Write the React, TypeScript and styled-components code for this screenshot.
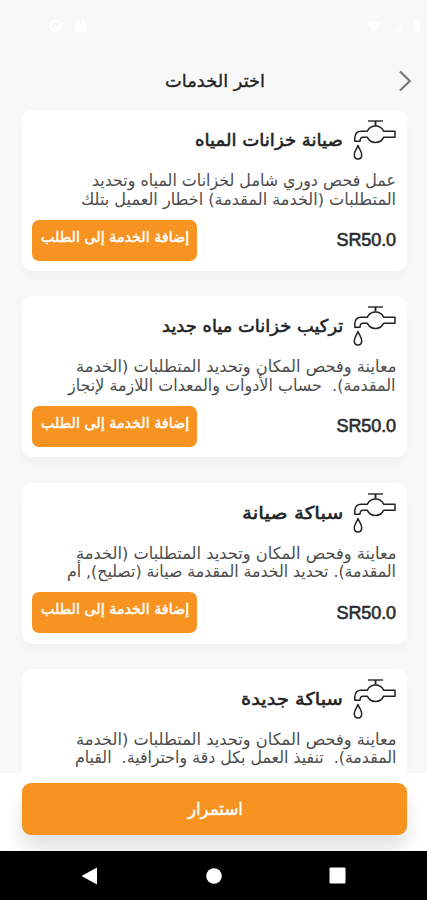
import React, { useLayoutEffect, useRef, useState } from "react";
import styled, { createGlobalStyle } from "styled-components";

const GlobalStyle = createGlobalStyle`
  * { box-sizing: border-box; }
  body { margin: 0; background: #f8f8f8; font-family: "DejaVu Sans", "Liberation Sans", sans-serif; }
`;

const Screen = styled.div`
  width: 427px;
  height: 900px;
  display: flex;
  flex-direction: column;
  overflow: hidden;
  background: #f8f8f8;
`;

const StatusBar = styled.div`
  height: 52px;
  flex: none;
  padding: 18px 6px 0 49px;
  display: flex;
  justify-content: space-between;
`;

const StatusGroup = styled.div`
  display: flex;
  gap: 11px;
  height: 16px;
  align-items: center;
`;

const Header = styled.header`
  height: 58px;
  flex: none;
  display: grid;
  grid-template-columns: 34px 1fr 34px;
  align-items: center;
  justify-items: center;
  padding: 0 4px 1px 7px;
  color: #242424;
`;

const Back = styled.button`
  grid-column: 3;
  border: 0;
  padding: 0;
  background: none;
  display: flex;
`;

const HeaderTitle = styled.h1`
  grid-column: 2;
  margin: 0;
  font-size: 17.5px;
  line-height: 22px;
  font-weight: 400;
  -webkit-text-stroke: 0.35px #242424;
`;

const List = styled.main`
  flex: none;
  height: 663px;
  overflow: hidden;
  padding: 0 20px 0 22px;
  display: flex;
  flex-direction: column;
  gap: 25.3px;
`;

const Card = styled.article`
  flex: none;
  height: 161px;
  padding: 8px 11px 10px 10px;
  border-radius: 10px;
  background: #fff;
  box-shadow: 0 7px 7px rgba(0, 0, 0, 0.025);
`;

const CardHead = styled.div`
  direction: rtl;
  display: flex;
  align-items: flex-start;
  gap: 10px;
  height: 54px;
  color: #222;
`;

const CardTitle = styled.h2`
  margin: 10px 0 0;
  font-size: 17.5px;
  line-height: 24px;
  font-weight: 400;
  -webkit-text-stroke: 0.55px #222;
`;

const Description = styled.div`
  direction: rtl;
  height: 47px;
  font-size: 16.5px;
  line-height: 18.6px;
  color: #4c4c4c;
`;

const CardFoot = styled.div`
  display: flex;
  justify-content: space-between;
`;

const AddButton = styled.button`
  width: 165px;
  height: 41px;
  margin-top: 0.5px;
  border: 0;
  border-radius: 7px;
  padding: 0 0 7px 2px;
  display: flex;
  align-items: center;
  justify-content: center;
  background: #f79321;
  color: #fff;
  font: 400 14.5px "DejaVu Sans", sans-serif;
  -webkit-text-stroke: 0.45px #fff;
`;

const Price = styled.div`
  padding-top: 10px;
  font: 400 18px/22px "Liberation Sans", sans-serif;
  letter-spacing: -0.1px;
  color: #2c2c2c;
  -webkit-text-stroke: 0.6px #2c2c2c;
`;

const Footer = styled.footer`
  flex: none;
  height: 78px;
  padding: 10px 20px 0 22px;
  background: #fff;
  overflow: hidden;
`;

const Continue = styled.button`
  width: 100%;
  height: 52px;
  border: 0;
  border-radius: 9px;
  padding: 0 0 0 1px;
  display: flex;
  align-items: center;
  justify-content: center;
  background: #f79321;
  box-shadow: 0 14px 18px rgba(0, 0, 0, 0.11);
  color: #fff;
  font: 400 17.5px "DejaVu Sans", sans-serif;
  -webkit-text-stroke: 0.5px #fff;
`;

const NavBar = styled.nav`
  flex: none;
  height: 49px;
  padding: 0 81px;
  background: #000;
  display: flex;
  align-items: center;
  justify-content: space-between;
`;

const FitBox = styled.span<{ $width: number }>`
  display: block;
  width: ${(p) => p.$width}px;
  direction: rtl;
  white-space: pre;
`;

const FitInner = styled.span`
  display: inline-block;
  transform-origin: right center;
`;

/* Condenses or widens one line of text so that it fills the given width. */
function FitLine({ width, children }: { width: number; children: string }) {
  const ref = useRef<HTMLSpanElement>(null);
  const [scale, setScale] = useState(1);
  useLayoutEffect(() => {
    if (ref.current) setScale(width / ref.current.offsetWidth);
  }, [width, children]);
  return (
    <FitBox $width={width}>
      <FitInner ref={ref} style={{ transform: `scaleX(${scale})` }}>{children}</FitInner>
    </FitBox>
  );
}

function Faucet() {
  return (
    <svg width="43" height="43" viewBox="0 0 43 43" fill="none" stroke="#222" strokeWidth="1.5" strokeLinejoin="round">
      <path d="M15 3H30" stroke="#555" strokeWidth="1.8" />
      <path d="M22.500 3v4.500" strokeWidth="1.9" />
      <path d="M14.400 13.200A9 9 0 0 1 30.600 13.200H42V19.300H30.600A9 9 0 0 1 14.400 19.300H10Q7 19.300 7 23.300H1.800V19.500Q2.300 13.200 8 13.200Z" />
      <path d="M5 27.500C3.800 31 1.300 33.500 1.300 36.800Q1.300 41 5 41T8.700 36.800C8.700 33.500 6.200 31 5 27.500Z" />
    </svg>
  );
}

type Line = [text: string, width: number];
interface Service { title: Line; lines: Line[]; price?: string; }

const services: Service[] = [
  { title: ["صيانة خزانات المياه", 148], price: "SR50.0", lines: [["عمل فحص دوري شامل لخزانات المياه وتحديد", 304], ["المتطلبات (الخدمة المقدمة) اخطار العميل بتلك", 315]] },
  { title: ["تركيب خزانات مياه جديد", 181], price: "SR50.0", lines: [["معاينة وفحص المكان وتحديد المتطلبات (الخدمة", 320], ["المقدمة).  حساب الأدوات والمعدات اللازمة لإنجاز", 328]] },
  { title: ["سباكة صيانة", 101], price: "SR50.0", lines: [["معاينة وفحص المكان وتحديد المتطلبات (الخدمة", 320], ["المقدمة). تحديد الخدمة المقدمة صيانة (تصليح), أم", 329]] },
  { title: ["سباكة جديدة", 102], lines: [["معاينة وفحص المكان وتحديد المتطلبات (الخدمة", 320], ["المقدمة).  تنفيذ العمل بكل دقة واحترافية.  القيام", 322]] },
];

export default function App() {
  return (
    <>
      <GlobalStyle />
      <Screen>
        <StatusBar>
          <StatusGroup>
            <svg width="15" height="14" viewBox="0 0 15 14"><circle cx="6.500" cy="7" r="5" fill="none" stroke="#fff" strokeWidth="2" /><path d="M5 7l3 3 6-6" fill="none" stroke="#fff" strokeWidth="2" /></svg>
            <svg width="11" height="14" viewBox="0 0 11 14" fill="#fff"><path d="M0 5h11v8H0zM2 5V2h2v3M7 5V2h2v3" /></svg>
          </StatusGroup>
          <StatusGroup>
            <svg width="14" height="11" viewBox="0 0 14 11" fill="#fff"><path d="M0 3Q7-3 14 3L7 11Z" /></svg>
            <svg width="10" height="11" viewBox="0 0 10 11" fill="#fbfbfb"><path d="M10 0v11H0Z" /></svg>
            <svg width="8" height="12" viewBox="0 0 8 12" fill="#fff"><path d="M3 0h2v1h2v11H1V1h2Z" /></svg>
          </StatusGroup>
        </StatusBar>
        <Header>
          <HeaderTitle><FitLine width={100}>اختر الخدمات</FitLine></HeaderTitle>
          <Back aria-label="رجوع">
            <svg width="16" height="22" viewBox="0 0 16 22" fill="none" stroke="#777" strokeWidth="2.200"><path d="M2 1.500L11.800 11L2 20.500" /></svg>
          </Back>
        </Header>
        <List>
          {services.map((s) => (
            <Card key={s.title[0]}>
              <CardHead>
                <Faucet />
                <CardTitle><FitLine width={s.title[1]}>{s.title[0]}</FitLine></CardTitle>
              </CardHead>
              <Description>
                {s.lines.map(([text, width]) => <FitLine key={text} width={width}>{text}</FitLine>)}
              </Description>
              {s.price && (
                <CardFoot>
                  <AddButton><FitLine width={148}>إضافة الخدمة إلى الطلب</FitLine></AddButton>
                  <Price>{s.price}</Price>
                </CardFoot>
              )}
            </Card>
          ))}
        </List>
        <Footer>
          <Continue><FitLine width={55}>استمرار</FitLine></Continue>
        </Footer>
        <NavBar>
          <svg width="17" height="18" viewBox="0 0 17 18" fill="#fff"><path d="M16 0.500V17.500L0.500 9Z" /></svg>
          <svg width="16" height="16" viewBox="0 0 16 16" fill="#fff"><circle cx="8" cy="8" r="7.800" /></svg>
          <svg width="17" height="17" viewBox="0 0 17 17" fill="#fff"><rect x="0.500" y="0.500" width="16" height="16" rx="1" /></svg>
        </NavBar>
      </Screen>
    </>
  );
}
